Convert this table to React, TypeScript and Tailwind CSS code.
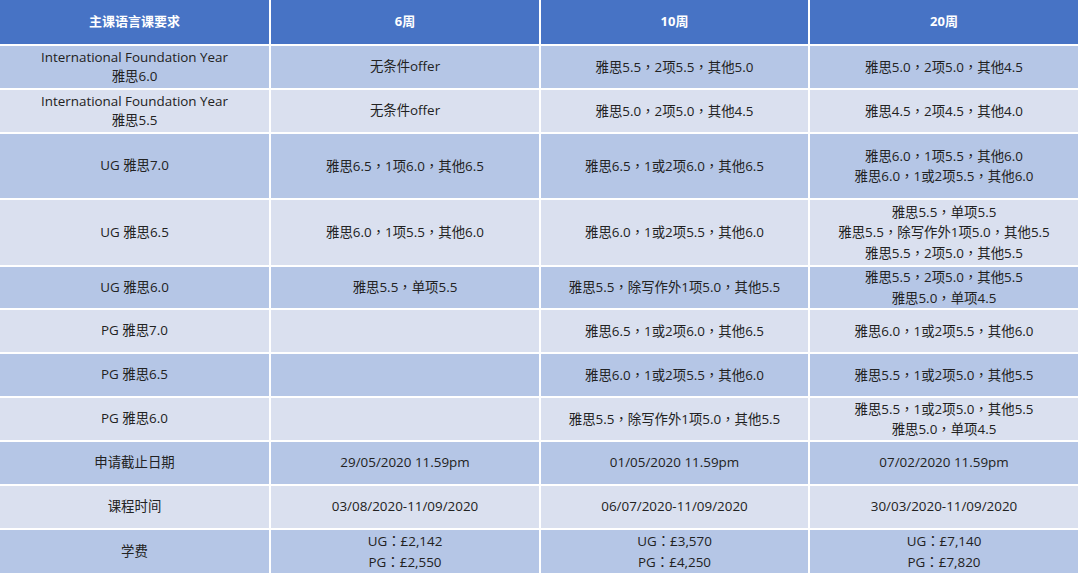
import React from "react";

type Row = { cells: string[][]; dark: boolean };

const rows: Row[] = [
  { dark: true, cells: [["International Foundation Year", "雅思6.0"], ["无条件offer"], ["雅思5.5，2项5.5，其他5.0"], ["雅思5.0，2项5.0，其他4.5"]] },
  { dark: false, cells: [["International Foundation Year", "雅思5.5"], ["无条件offer"], ["雅思5.0，2项5.0，其他4.5"], ["雅思4.5，2项4.5，其他4.0"]] },
  { dark: true, cells: [["UG 雅思7.0"], ["雅思6.5，1项6.0，其他6.5"], ["雅思6.5，1或2项6.0，其他6.5"], ["雅思6.0，1项5.5，其他6.0", "雅思6.0，1或2项5.5，其他6.0"]] },
  { dark: false, cells: [["UG 雅思6.5"], ["雅思6.0，1项5.5，其他6.0"], ["雅思6.0，1或2项5.5，其他6.0"], ["雅思5.5，单项5.5", "雅思5.5，除写作外1项5.0，其他5.5", "雅思5.5，2项5.0，其他5.5"]] },
  { dark: true, cells: [["UG 雅思6.0"], ["雅思5.5，单项5.5"], ["雅思5.5，除写作外1项5.0，其他5.5"], ["雅思5.5，2项5.0，其他5.5", "雅思5.0，单项4.5"]] },
  { dark: false, cells: [["PG 雅思7.0"], [], ["雅思6.5，1或2项6.0，其他6.5"], ["雅思6.0，1或2项5.5，其他6.0"]] },
  { dark: true, cells: [["PG 雅思6.5"], [], ["雅思6.0，1或2项5.5，其他6.0"], ["雅思5.5，1或2项5.0，其他5.5"]] },
  { dark: false, cells: [["PG 雅思6.0"], [], ["雅思5.5，除写作外1项5.0，其他5.5"], ["雅思5.5，1或2项5.0，其他5.5", "雅思5.0，单项4.5"]] },
  { dark: true, cells: [["申请截止日期"], ["29/05/2020 11.59pm"], ["01/05/2020 11.59pm"], ["07/02/2020 11.59pm"]] },
  { dark: false, cells: [["课程时间"], ["03/08/2020-11/09/2020"], ["06/07/2020-11/09/2020"], ["30/03/2020-11/09/2020"]] },
  { dark: true, cells: [["学费"], ["UG：£2,142", "PG：£2,550"], ["UG：£3,570", "PG：£4,250"], ["UG：£7,140", "PG：£7,820"]] },
];

const headers = ["主课语言课要求", "6周", "10周", "20周"];

function Line({ text }: { text: string }) {
  const parts = text.split(/([，：])/);
  return (
    <div>
      {parts.map((p, i) =>
        p === "，" || p === "：" ? (
          <span key={i} style={{ fontFamily: '"Noto Sans CJK TC", sans-serif' }}>
            {p}
          </span>
        ) : (
          <span key={i}>{p}</span>
        )
      )}
    </div>
  );
}

export default function App() {
  return (
    <div
      className="w-[1080px] h-[575px] bg-white overflow-hidden"
      style={{ fontFamily: '"Open Sans", "Noto Sans CJK SC", sans-serif' }}
    >
      <div className="grid grid-cols-[269px_268px_267px_268px] grid-rows-[44px_42px_42px_64px_65px_41px_42px_42px_42px_42px_42px_43px] gap-[2px] text-[13.4px] text-[#222222]">
        {headers.map((h, i) => (
          <div key={i} className="bg-[#4773c5] flex items-center justify-center font-bold text-[13px] text-white">
            {h}
          </div>
        ))}
        {rows.map((r, ri) =>
          r.cells.map((c, ci) => (
            <div
              key={`${ri}-${ci}`}
              className={`${r.dark ? "bg-[#b5c6e6]" : "bg-[#dae0ef]"} flex flex-col items-center justify-center text-center leading-[19.5px]`}
            >
              {c.map((line, li) => (
                <Line key={li} text={line} />
              ))}
            </div>
          ))
        )}
      </div>
    </div>
  );
}
